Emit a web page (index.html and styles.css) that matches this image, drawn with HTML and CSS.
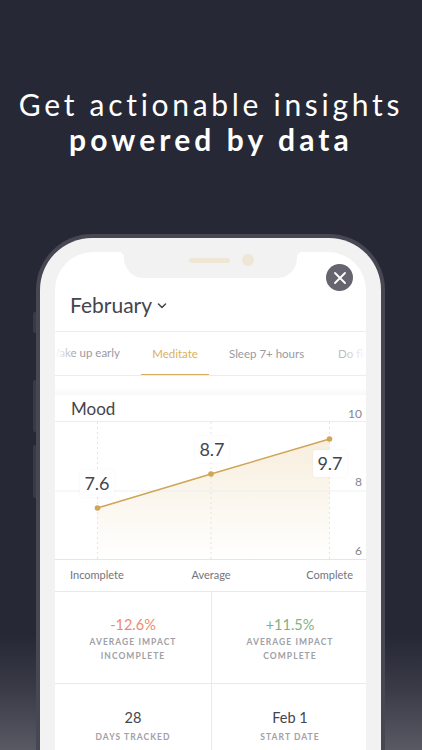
FILE: index.html
```html
<!DOCTYPE html>
<html lang="en">
<head>
    <meta charset="UTF-8">
    <meta name="viewport" content="width=device-width, initial-scale=1.0">
    <title>Insights</title>
    <link rel="stylesheet" href="styles.css">
</head>
<body>
    <div class="page">
        <h1 class="headline">Get actionable insights<br><strong>powered by data</strong></h1>
        <div class="phone">
            <span class="side-btn mute"></span>
            <span class="side-btn vol-up"></span>
            <span class="side-btn vol-down"></span>
            <div class="bezel">
                <div class="notch">
                    <span class="speaker"></span>
                    <span class="camera"></span>
                </div>
                <div class="screen">
                    <div class="close">
                        <svg width="14" height="14" viewBox="0 0 14 14"><path d="M2 2L12 12M12 2L2 12" stroke="#fff" stroke-width="1.8" stroke-linecap="round"/></svg>
                    </div>
                    <div class="month">
                        <span>February</span>
                        <svg width="10" height="6" viewBox="0 0 10 6"><path d="M1.5 1L5 4.5L8.5 1" fill="none" stroke="#44454e" stroke-width="1.5" stroke-linecap="round" stroke-linejoin="round"/></svg>
                    </div>
                    <div class="tabs">
                        <span class="tab tab-wake">Wake up early</span>
                        <span class="tab tab-active">Meditate</span>
                        <span class="tab tab-sleep">Sleep 7+ hours</span>
                        <span class="tab tab-do">Do flo</span>
                        <span class="tab-fade left"></span>
                        <span class="tab-fade right"></span>
                    </div>
                    <div class="spacer"></div>
                    <div class="card-title">Mood</div>
                    <div class="chart">
                        <svg class="plot" width="311" height="137" viewBox="0 0 311 137">
                            <defs>
                                <linearGradient id="fill" x1="0" y1="0" x2="0" y2="1">
                                    <stop offset="0" stop-color="#f7eedd"/>
                                    <stop offset="1" stop-color="#ffffff"/>
                                </linearGradient>
                            </defs>
                            <path d="M42.5 86L156 52L274.5 17V137H42.5Z" fill="url(#fill)"/>
                            <path d="M0 69H311" stroke="#efefef" stroke-width="1"/>
                            <path d="M42.5 0V137M156 0V137M274.5 0V137" stroke="#e4e4e4" stroke-width="1" stroke-dasharray="2 3"/>
                            <path d="M42.5 86L156 52L274.5 17" fill="none" stroke="#cfa556" stroke-width="1.5"/>
                            <circle cx="42.5" cy="86" r="2.8" fill="#cfa556"/>
                            <circle cx="156" cy="52" r="2.8" fill="#cfa556"/>
                            <circle cx="274.5" cy="17" r="2.8" fill="#cfa556"/>
                        </svg>
                        <span class="chip chip-a">7.6</span>
                        <span class="chip chip-b">8.7</span>
                        <span class="chip chip-c">9.7</span>
                        <span class="tick tick-10">10</span>
                        <span class="tick tick-8">8</span>
                        <span class="tick tick-6">6</span>
                    </div>
                    <div class="axis">
                        <span>Incomplete</span>
                        <span class="axis-mid">Average</span>
                        <span>Complete</span>
                    </div>
                    <div class="stats">
                        <div class="stat">
                            <div class="value bad">-12.6%</div>
                            <div class="label">Average impact<br>incomplete</div>
                        </div>
                        <div class="stat">
                            <div class="value good">+11.5%</div>
                            <div class="label">Average impact<br>complete</div>
                        </div>
                        <div class="stat stat-plain">
                            <div class="value">28</div>
                            <div class="label">Days tracked</div>
                        </div>
                        <div class="stat stat-plain">
                            <div class="value">Feb 1</div>
                            <div class="label">Start date</div>
                        </div>
                    </div>
                </div>
            </div>
        </div>
    </div>
</body>
</html>
```

FILE: styles.css
```css
* {
    margin: 0;
    padding: 0;
    box-sizing: border-box;
}
html, body {
    height: 100%;
    overflow: hidden;
}
body {
    font-family: "Lato", "Noto Sans", sans-serif;
    color: #44454e;
}
.page {
    height: 750px;
    overflow: hidden;
    background: linear-gradient(to bottom, #262835 0, #262835 635px, #3a3b47 690px, #585963 750px);
    padding-top: 87px;
}
.headline {
    color: #fff;
    font-size: 30px;
    font-weight: 400;
    line-height: 35px;
    letter-spacing: 3.7px;
    text-align: center;
    white-space: nowrap;
}
.headline strong {
    font-weight: 700;
    letter-spacing: 4.1px;
}
.phone {
    position: relative;
    width: 349px;
    height: 700px;
    margin: 77px 0 0 36px;
    background: #474753;
    border-radius: 56px 56px 0 0;
    padding: 4px 4px 0;
}
.side-btn {
    position: absolute;
    left: -3px;
    width: 3px;
    background: #3a3a46;
    border-radius: 2px 0 0 2px;
}
.mute { top: 78px; height: 21px; }
.vol-up { top: 146px; height: 52px; }
.vol-down { top: 211px; height: 53px; }
.bezel {
    position: relative;
    height: 100%;
    background: #f2f2f2;
    border-radius: 52px 52px 0 0;
    padding: 14px 15px 0;
}
.notch {
    position: absolute;
    z-index: 2;
    top: 0;
    left: 84px;
    width: 173px;
    height: 40px;
    background: #f2f2f2;
    border-radius: 0 0 20px 20px;
    display: flex;
    justify-content: center;
    align-items: center;
    gap: 12px;
    padding-left: 22px;
}
.notch::before, .notch::after {
    content: "";
    position: absolute;
    top: 14px;
    width: 6px;
    height: 6px;
}
.notch::before {
    left: -6px;
    background: radial-gradient(circle at 0 100%, transparent 6px, #f2f2f2 6.5px);
}
.notch::after {
    right: -6px;
    background: radial-gradient(circle at 100% 100%, transparent 6px, #f2f2f2 6.5px);
}
.speaker {
    width: 41px;
    height: 5px;
    margin-top: 4px;
    background: #efe6d6;
    border-radius: 3px;
}
.camera {
    width: 12px;
    height: 12px;
    margin-top: 4px;
    background: #efe6d6;
    border-radius: 50%;
}
.screen {
    position: relative;
    height: 100%;
    background: #fff;
    border-radius: 38px 38px 0 0;
    overflow: hidden;
}
.close {
    position: absolute;
    top: 12px;
    right: 13px;
    width: 27px;
    height: 27px;
    background: #66646f;
    border-radius: 50%;
    display: flex;
    justify-content: center;
    align-items: center;
}
.month {
    height: 80px;
    padding: 40px 0 0 15px;
    display: flex;
    align-items: flex-start;
    gap: 5px;
    font-size: 21px;
    line-height: 26px;
    border-bottom: 1px solid #ececec;
}
.month svg {
    margin-top: 11px;
}
.tabs {
    position: relative;
    height: 44px;
    font-size: 11.5px;
    color: #9a9aa1;
    border-bottom: 1px solid #ececec;
    overflow: hidden;
}
.tab {
    position: absolute;
    top: 15px;
    white-space: nowrap;
}
.tab-wake { left: -7px; top: 14px; }
.tab-active {
    left: 86px;
    top: 0;
    width: 68px;
    height: 44px;
    line-height: 44px;
    text-align: center;
    color: #dcb05e;
    border-bottom: 2px solid #d9ad5c;
}
.tab-sleep { left: 174px; }
.tab-do { left: 283px; color: #bdbdc2; }
.tab-fade {
    position: absolute;
    top: 0;
    bottom: 0;
    width: 22px;
}
.tab-fade.left {
    left: 0;
    background: linear-gradient(to right, #fff, rgba(255, 255, 255, 0));
}
.tab-fade.right {
    right: 0;
    background: linear-gradient(to left, #fff, rgba(255, 255, 255, 0));
}
.spacer {
    height: 19px;
    background: linear-gradient(to bottom, #fff 60%, #f8f8f8);
}
.card-title {
    height: 27px;
    padding-left: 16px;
    font-size: 17px;
    line-height: 28px;
    border-bottom: 1px solid #ececec;
}
.chart {
    position: relative;
    height: 138px;
    border-bottom: 1px solid #e6e6e6;
}
.plot {
    display: block;
}
.chip {
    position: absolute;
    width: 34px;
    height: 27px;
    background: #fff;
    border-radius: 3px;
    box-shadow: 0 0 3px rgba(0, 0, 0, 0.05);
    font-size: 18px;
    line-height: 27px;
    text-align: center;
}
.chip-a { left: 25px; top: 48px; }
.chip-b { left: 140px; top: 14px; }
.chip-c { left: 258px; top: 28px; }
.tick {
    position: absolute;
    right: 4px;
    font-size: 12px;
    color: #85858c;
    line-height: 14px;
}
.tick-10 { top: -15px; }
.tick-8 { top: 53px; }
.tick-6 { top: 122px; }
.axis {
    height: 32px;
    display: flex;
    justify-content: space-between;
    padding: 8px 13px 0 15px;
    font-size: 11px;
    color: #74747c;
    border-bottom: 1px solid #e9e9e9;
}
.axis-mid {
    margin-right: 8px;
}
.stats {
    display: grid;
    grid-template-columns: 157px 154px;
    grid-auto-rows: 92px;
}
.stat {
    text-align: center;
    padding-top: 24px;
    border-bottom: 1px solid #e9e9e9;
}
.stat:nth-child(odd) {
    border-right: 1px solid #e9e9e9;
}
.stat:nth-child(even) {
    padding-left: 2px;
}
.stat-plain {
    padding-top: 25px;
}
.value {
    font-size: 14.5px;
    line-height: 18px;
}
.bad { color: #ee8a6b; }
.good { color: #7fb283; }
.label {
    margin-top: 2px;
    font-size: 8.5px;
    line-height: 13.5px;
    font-weight: 700;
    letter-spacing: 1.05px;
    text-transform: uppercase;
    color: #a0a0a6;
}
.stat-plain .label {
    margin-top: 4px;
}
```
